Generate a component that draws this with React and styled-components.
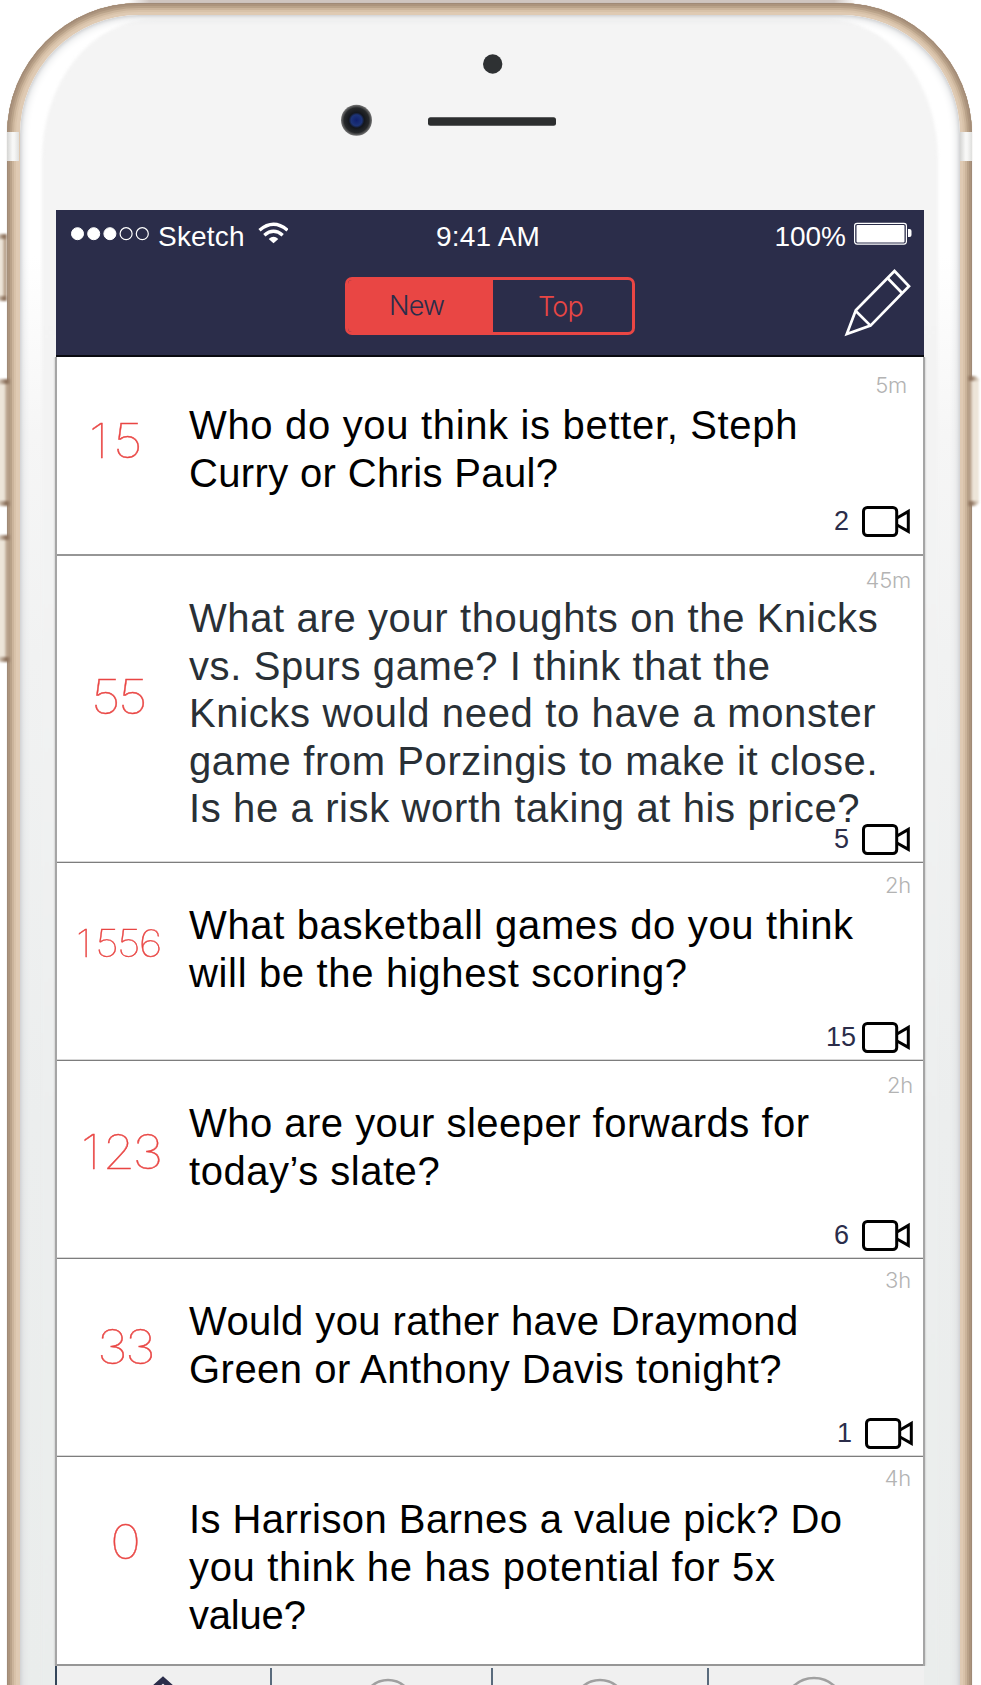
import React from "react";
import styled, { createGlobalStyle } from "styled-components";

const navy = "#2b2d4a";
const red = "#e94644";
const sans = `"Liberation Sans", Arial, sans-serif`;
const light = `Inter, "Liberation Sans", sans-serif`;

const GlobalStyle = createGlobalStyle`
  * { box-sizing: border-box; }
  body { margin: 0; background: #fff; overflow: hidden; }
`;

const Stage = styled.main`
  position: relative;
  width: 981px;
  height: 1685px;
  padding: 3px 9px 0 7px;
  overflow: hidden;
  background: #fff;
  font-family: ${sans};
`;

const TopEdge = styled.div`
  position: absolute;
  top: 0;
  left: 128px;
  width: 728px;
  height: 4px;
  background: linear-gradient(90deg, transparent, #cfc5c0 3%, #cfc5c0 97%, transparent);
`;

const SideKey = styled.div`
  position: absolute;
  z-index: 1;
  top: ${(p) => p.$top}px;
  ${(p) => (p.$right ? "right: 2px;" : "left: -4px;")}
  width: ${(p) => (p.$right ? 11 : p.$width || 14)}px;
  height: ${(p) => p.$height}px;
  border-radius: ${(p) => (p.$right ? "0 5px 5px 0" : "5px 0 0 5px")};
  background:
    linear-gradient(${(p) => (p.$right ? "270deg" : "90deg")}, #d9cdbf 20%, #866a54 75%, #a68e79) top / 100% 5px no-repeat,
    linear-gradient(${(p) => (p.$right ? "270deg" : "90deg")}, #d9cdbf 20%, #866a54 75%, #a68e79) bottom / 100% 5px no-repeat,
    linear-gradient(${(p) => (p.$right ? "270deg" : "90deg")}, #eee6da, #ece4d8 60%, #b8a18b 75%, #b59e88);
  filter: blur(0.9px);
`;

const Shell = styled.div`
  position: relative;
  height: 1900px;
  padding: 12px 12px 0 13px;
  border-radius: 132px;
  background: #dfcab3;
  box-shadow:
    0 0 1px #b9aea4,
    inset 0 0 0 1px #a08a77,
    inset 0 0 0 3px #ac947d,
    inset 0 0 0 5px #b9a289,
    inset 0 0 0 7px #cbb49b,
    inset 0 0 0 9px #d8c2a9;
`;

const Band = styled.div`
  position: absolute;
  top: 129px;
  ${(p) => (p.$right ? "right: 0;" : "left: 0;")}
  width: 12px;
  height: 29px;
  background: linear-gradient(90deg, #d5d5d3, #f7f7f6 45%, #f7f7f6 60%, #dfdfdd);
`;

const Face = styled.div`
  position: relative;
  height: 1880px;
  padding-top: 195px;
  border-radius: 119px;
  overflow: hidden;
  background: linear-gradient(#fff 0, #fff 240px, #f6f6f6 420px, #f1f2f2 640px, #eceeee 1100px, #eaedec 1670px);

  &::before {
    content: "";
    position: absolute;
    inset: 4px 22px -20px 22px;
    border-radius: 112px 112px 0 0 / 140px 140px 0 0;
    background: linear-gradient(#f4f4f4 0, #f3f3f3 400px, #f1f2f2 640px, #eceeee 1100px, #eaedec 1670px);
    filter: blur(1.5px);
  }
  &::after {
    content: "";
    position: absolute;
    inset: 0;
    border-radius: 119px;
    box-shadow: inset 0 0 3px 1px #cfd0d2, inset 0 0 8px 2px #d6d8da;
  }
`;

const Hardware = styled.svg`
  position: absolute;
  left: 309px;
  top: 30px;
  z-index: 2;
`;

const Screen = styled.section`
  position: relative;
  z-index: 3;
  width: 868px;
  margin-left: 36px;
  height: 1500px;
`;

const Header = styled.header`
  height: 147px;
  background: ${navy};
  border-bottom: 2px solid #090a10;
  color: #fff;
`;

const Feed = styled.div`
  margin: 0 -1px;
  border: solid #a5a5a5;
  border-width: 0 2px;
  background: #fff;
  box-shadow: 0 0 2px #b5b5b5;
  clip-path: inset(0 -3px);
`;

const StatusBar = styled.div`
  display: grid;
  grid-template-columns: 380px 1fr auto;
  height: 52px;
  font-size: 28px;
`;

const StatusGroup = styled.div`
  display: flex;
  height: 52px;
  padding: ${(p) => p.$pad};
`;

const StatusText = styled.span`
  height: 52px;
  margin: 0 ${(p) => p.$gap || 0}px 0 ${(p) => p.$left || 0}px;
  line-height: 54px;
  letter-spacing: ${(p) => p.$spacing || 0}px;
`;

const Toolbar = styled.div`
  display: flex;
  justify-content: space-between;
  padding: 6px 13px 0 289px;
`;

const Segmented = styled.div`
  display: flex;
  width: 290px;
  height: 58px;
  margin-top: 9px;
  overflow: hidden;
  border: 3px solid ${red};
  border-radius: 7px;
`;

const Segment = styled.button`
  width: ${(p) => p.$width}px;
  padding: ${(p) => p.$pad};
  border: 0;
  background: ${(p) => (p.$active ? red : "transparent")};
  color: ${(p) => (p.$active ? navy : red)};
  font: 300 27px/52px ${light};
  letter-spacing: -0.8px;
  text-align: left;
`;

const Row = styled.article`
  display: grid;
  grid-template-columns: 132px 734px;
  grid-template-rows: 100%;
  height: ${(p) => p.$height}px;
  border-bottom: ${(p) => (p.$thick ? "2px solid #969696" : "1px solid #7d7d7d")};
  box-shadow: ${(p) => (p.$thick ? "none" : "inset 0 -1px #d8d8d8")};
`;

const Votes = styled.div`
  grid-area: 1 / 1;
  margin: ${(p) => p.$top}px 0 0 ${(p) => p.$left}px;
  transform: scaleX(1.12);
  transform-origin: 0 0;
  color: ${red};
  font: 100 ${(p) => (p.$small ? 37.5 : 47)}px/48px ${light};
  -webkit-text-stroke: 0.4px ${red};
  letter-spacing: ${(p) => (p.$small ? -1.8 : -2.4)}px;
`;

const LeadDigit = styled.span`
  letter-spacing: ${(p) => p.$spacing}px;
`;

const Question = styled.div`
  grid-area: 1 / 2;
  padding-top: ${(p) => p.$top}px;
  color: ${(p) => p.$color || "#000"};
  font-size: 40px;
  line-height: 47.6px;
  white-space: nowrap;
`;

const Line = styled.div`
  letter-spacing: ${(p) => p.$spacing}px;
`;

const Age = styled.time`
  grid-area: 1 / 2;
  justify-self: end;
  padding: ${(p) => p.$top}px ${(p) => p.$right}px 0 0;
  color: #b3b3b3;
  font: 300 22px/22px ${light};
  letter-spacing: -0.2px;
`;

const Replies = styled.div`
  grid-area: 1 / 2;
  place-self: end;
  display: flex;
  align-items: center;
  gap: ${(p) => p.$gap}px;
  padding: 0 ${(p) => p.$right}px ${(p) => p.$bottom}px 0;
  color: ${navy};
  font-size: 27px;
  line-height: 31px;
`;

const TabBar = styled.nav`
  display: grid;
  grid-template-columns: 215px 221px 216px 211px;
  height: 60px;
  margin-left: 1px;
  background: #f0f0f0;
  box-shadow: -2px 0 0 #34465a;
`;

const Tab = styled.a`
  display: flex;
  justify-content: center;
  margin-top: 2px;
  padding: ${(p) => p.$top}px ${(p) => p.$right || 0}px 0 ${(p) => p.$left || 0}px;
  border-right: ${(p) => (p.$last ? "0" : "2px solid #5a6b7d")};
`;

const Camera = () => (
  <svg width="48" height="31" viewBox="0 0 48 31" fill="none" stroke="#000" strokeWidth="3">
    <rect x="1.5" y="1.5" width="33.2" height="28" rx="3.8" />
    <path d="M35 12 46.3 5.4V25.4L35 19" />
  </svg>
);

const Pencil = () => (
  <svg width="67" height="69" viewBox="844 268 67 69" fill="none" stroke="#fff" strokeWidth="2.7">
    <path d="M894.5 271 909 286.2 870.5 325.6 846.8 333.9 855.8 310.2Z" />
    <path d="M887.5 278 902 293M855.8 311 870.5 325.6" />
  </svg>
);

const Signal = () => (
  <svg width="80" height="52" viewBox="0 0 80 52" fill="#fff" stroke="#fff">
    {[0, 1, 2, 3, 4].map((i) => (
      <circle key={i} cx={6.5 + i * 16.2} cy="23.7" r="6" fill={i < 3 ? "#fff" : "none"} strokeWidth={i < 3 ? 1 : 1.2} />
    ))}
  </svg>
);

const Wifi = () => (
  <svg width="30" height="52" viewBox="258 210 30 52" fill="none" stroke="#fff" strokeWidth="3.4">
    <path d="M259.5 230.3Q273.5 218.3 287.5 230.3" />
    <path d="M264.3 235.2Q273.5 227.3 282.7 235.2" />
    <path d="M268.7 239Q273.5 234.6 278.3 239L273.5 243.3Z" fill="#fff" stroke="none" />
  </svg>
);

const Battery = () => (
  <svg width="58" height="52" viewBox="854 210 58 52">
    <rect x="854.6" y="223.3" width="51.8" height="20.8" rx="2.5" fill="none" stroke="#fff" strokeWidth="1.2" />
    <rect x="856.5" y="225" width="48" height="17.5" rx="1" fill="#fff" />
    <path d="M908 229h1.5a2 2 0 0 1 2 2v4a2 2 0 0 1-2 2H908Z" fill="#fff" />
  </svg>
);

const Circle = ({ r }) => (
  <svg width={r * 2 + 4} height={r * 2 + 4} fill="none" stroke="#a0a0a0" strokeWidth="2.6">
    <circle cx={r + 2} cy={r + 2} r={r} />
  </svg>
);

const Home = () => (
  <svg width="60" height="40" viewBox="-30 0 60 40" fill="none" stroke={navy} strokeWidth="5.5">
    <path d="M-28 29 0 3.9 28 29" />
  </svg>
);

const posts = [
  { height: 199, thick: true, votes: "15", vTop: 60, vLeft: 32, vLead: 4.2, qTop: 45.4, age: "5m", aTop: 17, aRight: 16, n: "2", gap: 13, right: 13, bottom: 17,
    lines: [["Who do you think is better, Steph", 0.67], ["Curry or Chris Paul?", 0.35]] },
  { height: 307, votes: "55", vTop: 117, vLeft: 34, qTop: 39, color: "#293036", age: "45m", aTop: 13, aRight: 12, n: "5", gap: 13, right: 13, bottom: 7,
    lines: [["What are your thoughts on the Knicks", 0.62], ["vs. Spurs game? I think that the", 0.6], ["Knicks would need to have a monster", 0.64], ["game from Porzingis to make it close.", 0.6], ["Is he a risk worth taking at his price?", 0.62]] },
  { height: 198, votes: "1556", vTop: 57, vLeft: 19, vLead: 3.5, small: true, qTop: 39.4, age: "2h", aTop: 11, aRight: 12, n: "15", gap: 6, right: 13, bottom: 7,
    lines: [["What basketball games do you think", 0.65], ["will be the highest scoring?", 0.66]] },
  { height: 198, votes: "123", vTop: 67, vLeft: 24, vLead: 2, qTop: 39.4, age: "2h", aTop: 13, aRight: 10, n: "6", gap: 13, right: 13, bottom: 7,
    lines: [["Who are your sleeper forwards for", 0.48], ["today’s slate?", 0.52]] },
  { height: 198, votes: "33", vTop: 64, vLeft: 40, qTop: 39.4, age: "3h", aTop: 10, aRight: 12, n: "1", gap: 13, right: 10, bottom: 7,
    lines: [["Would you rather have Draymond", 0.41], ["Green or Anthony Davis tonight?", 0.48]] },
  { height: 209, thick: true, votes: "0", vTop: 61, vLeft: 53, qTop: 39.4, age: "4h", aTop: 10, aRight: 12,
    lines: [["Is Harrison Barnes a value pick? Do", 0.44], ["you think he has potential for 5x", 0.66], ["value?", -0.2]] },
];

export default function App() {
  return (
    <Stage>
      <GlobalStyle />
      <TopEdge />
      <SideKey $top={234} $height={67} $width={11} />
      <SideKey $top={379} $height={127} />
      <SideKey $top={535} $height={127} />
      <SideKey $right $top={376} $height={130} />
      <Shell>
        <Band />
        <Band $right />
        <Face>
          <Screen>
            <Header>
              <StatusBar>
                <StatusGroup $pad="0 0 0 15px">
                  <Signal />
                  <StatusText $left={7} $gap={13} $spacing={0.2}>Sketch</StatusText>
                  <Wifi />
                </StatusGroup>
                <StatusText $spacing={0.2}>9:41 AM</StatusText>
                <StatusGroup $pad="0 12px 0 0">
                  <StatusText $gap={8}>100%</StatusText>
                  <Battery />
                </StatusGroup>
              </StatusBar>
              <Toolbar>
                <Segmented>
                  <Segment $active $width={145} $pad="0 0 0 41px">New</Segment>
                  <Segment $width={139} $pad="1px 0 0 45px">Top</Segment>
                </Segmented>
                <Pencil />
              </Toolbar>
            </Header>
            <Feed>
              {posts.map((p) => (
                <Row key={p.votes} $height={p.height} $thick={p.thick}>
                  <Votes $top={p.vTop} $left={p.vLeft} $small={p.small}>
                    {p.vLead ? <LeadDigit $spacing={p.vLead}>{p.votes[0]}</LeadDigit> : p.votes[0]}
                    {p.votes.slice(1)}
                  </Votes>
                  <Question $top={p.qTop} $color={p.color}>
                    {p.lines.map(([text, spacing]) => (
                      <Line key={text} $spacing={spacing}>{text}</Line>
                    ))}
                  </Question>
                  <Age $top={p.aTop} $right={p.aRight}>{p.age}</Age>
                  {p.n && (
                    <Replies $gap={p.gap} $right={p.right} $bottom={p.bottom}>
                      {p.n}
                      <Camera />
                    </Replies>
                  )}
                </Row>
              ))}
            </Feed>
            <TabBar>
              <Tab $top={8} $right={1}><Home /></Tab>
              <Tab $top={10} $left={13}><Circle r={25} /></Tab>
              <Tab $top={10} $right={1}><Circle r={26} /></Tab>
              <Tab $last $top={8} $right={1}><Circle r={30} /></Tab>
            </TabBar>
          </Screen>
        </Face>
        <Hardware width="260" height="110" viewBox="316 33 260 110">
          <defs>
            <radialGradient id="lens">
              <stop offset="0" stopColor="#10206e" />
              <stop offset="0.35" stopColor="#1d3478" />
              <stop offset="0.5" stopColor="#14171d" />
              <stop offset="0.8" stopColor="#26282a" />
              <stop offset="1" stopColor="#777" />
            </radialGradient>
          </defs>
          <circle cx="492.7" cy="64" r="9.7" fill="#2e3133" />
          <circle cx="356.5" cy="120.3" r="15.5" fill="url(#lens)" />
          <rect x="428" y="117.3" width="128" height="8.4" rx="2.5" fill="#2c2e2f" />
        </Hardware>
      </Shell>
    </Stage>
  );
}
